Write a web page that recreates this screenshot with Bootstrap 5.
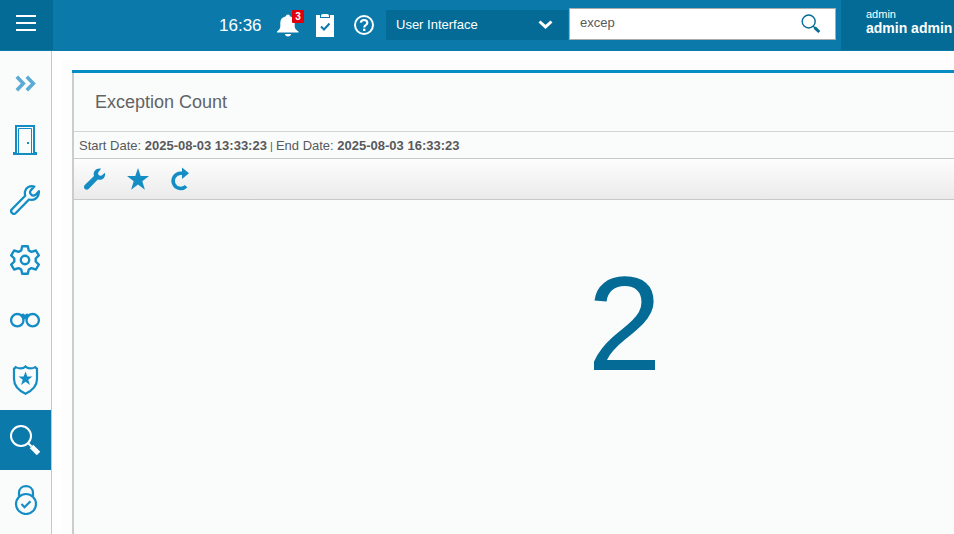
<!DOCTYPE html>
<html lang="en">
<head>
<meta charset="utf-8">
<meta name="viewport" content="width=device-width, initial-scale=1">
<title>Exception Count</title>
<link href="https://cdn.jsdelivr.net/npm/bootstrap@5.3.0/dist/css/bootstrap.min.css" rel="stylesheet">
<style>
body{font-family:"Liberation Sans",Arial,sans-serif;background:#fff;height:100vh;color:#58595b;font-size:13px;line-height:16px}
svg{display:block;flex:none}
.topbar{height:51px;padding-bottom:1px;background:#0b7aab}
.menu-btn{width:53px;height:50px;background:#036b95;border:0;border-radius:0;gap:5px;padding:0 1px 4px 0}
.menu-btn span{display:block;width:20px;height:2px;background:#fff}
.clock{font-size:17px;line-height:20px;width:42px;margin-top:2px}
.bell{width:22px;margin-left:16px;margin-right:1px}
.count{left:15px;top:-4px;width:12px;height:13px;background:#e0000b;border-radius:1px;font-size:10px;line-height:13px}
.help{margin-left:20px}
.scope{width:182px;height:30px;background:#036b95;margin-left:12px;padding:0 15px 0 10px}
.search-box{width:267px;height:32px;border:1px solid #a9abad;margin:-2px 0 0 1px;background:#fff;padding-right:14px}
.search-box input{border:0;outline:0;padding:0 0 3px 10px;width:220px;color:#58595b;font-size:13px}
.user{width:113px;height:50px;margin-left:5px;background:#036b95;padding:8px 0 0 25px;white-space:nowrap}
.user-id{font-size:11px;line-height:13px}
.user-name{font-size:14px;line-height:15px}
.content-row{min-height:0}
.side{width:52px;background:#fafcfc;border-right:1px solid #c8c8c8}
.side a{height:60px;padding-left:10px;color:#148dc4;flex:none}
.side a:first-child{height:59px;padding-top:4px;color:#5babd5}
.side a.active{background:#0b7aab;color:#fff}
.stage{background:#fdfdfd;margin:9px 0 0 10px;padding:10px 0 0 10px}
.panel{background:#fafcfc;border-top:3px solid #058cc3;min-width:0}
.panel-in{border-left:2px solid #cbcccc}
.panel-title{height:59px;border-bottom:1px solid #d2d4d4;padding-left:21px;font-size:18px;line-height:22px;font-weight:400;margin:0;color:#626365}
.dates{height:27px;border-bottom:1px solid #cacaca;padding:1px 0 0 5px;white-space:pre}
.dates small{font-size:11px}
.tools{height:41px;border-bottom:1px solid #c8c8c8;background:linear-gradient(#fdfdfd,#ebebeb);color:#148dc4;padding-left:9px}
.favorite{margin-left:20px}
.refresh{margin-left:21px}
.total{font-size:134px;line-height:150px;color:#036b95;padding:49px 0 0 221px}
</style>
<script src="https://cdn.jsdelivr.net/npm/bootstrap@5.3.0/dist/js/bootstrap.bundle.min.js"></script>
</head>
<body class="d-flex flex-column overflow-hidden">
<header class="topbar d-flex text-white flex-shrink-0">
  <button class="menu-btn d-flex flex-column align-items-center justify-content-center" aria-label="Menu"><span></span><span></span><span></span></button>
  <div class="d-flex align-items-center ms-auto">
    <div class="clock">16:36</div>
    <div class="bell position-relative">
      <svg width="22" height="23" viewBox="0 0 22 23" fill="currentColor"><path d="M11 0.500c1.200 0 1.800.8 1.900 1.800 3.300.8 4.800 3.300 4.800 6.500v3.700c0 2.300 1.700 3.700 3.800 4.900v1H0v-1c1.700-1.200 3.300-2.600 3.300-4.900V8.800c0-3.200 1.800-5.700 5.600-6.500.1-1 .9-1.800 2.100-1.800zM7.800 20h6.400c-.4 1.500-1.500 2.500-3.200 2.500s-2.800-1-3.200-2.500z"/></svg>
      <span class="count position-absolute fw-bold text-center">3</span>
    </div>
    <svg class="ms-3" width="18" height="23" viewBox="0 0 18 23"><path fill="#fff" d="M0 1h4v3h10V1h4v22H0z"/><path fill="#fff" d="M5 3V1.500Q5 0 7 0h4q2 0 2 1.500V3z"/><path d="M5 12.500l3 3 5.500-6" fill="none" stroke="#0b7aab" stroke-width="2"/></svg>
    <svg class="help" width="20" height="20" viewBox="0 0 20 20" fill="none" stroke="#fff"><circle cx="10" cy="10" r="9" stroke-width="2"/><path d="M6.800 7.600C7 5.900 8.200 5 10 5c2 0 3.300 1 3.300 2.700 0 2.300-3 2.300-3 4.700" stroke-width="2.200"/><path d="M9 13.700h2.400V16H9z" fill="#fff" stroke="none"/></svg>
    <div class="scope d-flex align-items-center justify-content-between"><span>User Interface</span><svg width="15" height="10" viewBox="0 0 15 10"><path d="M1.500 1.500l6 5.400 6-5.400" fill="none" stroke="#fff" stroke-width="3"/></svg></div>
    <div class="search-box d-flex align-items-center justify-content-between"><input type="text" value="excep" aria-label="Search"><svg width="20" height="20" viewBox="0 0 20 20" fill="none" stroke="#036b95"><circle cx="7.700" cy="7.500" r="6.500" stroke-width="1.400"/><path d="M12 12l2 2" stroke-width="1.300"/><path d="M13.700 13.700l4.600 4.300" stroke-width="3"/></svg></div>
    <div class="user align-self-start"><div class="user-id">admin</div><div class="user-name fw-bold">admin admin</div></div>
  </div>
</header>
<div class="content-row d-flex flex-grow-1">
  <nav class="side d-flex flex-column flex-shrink-0 overflow-hidden">
    <a href="#" class="d-flex align-items-center" aria-label="Expand"><svg width="30" height="30" viewBox="0 0 30 30" fill="none" stroke="currentColor" stroke-width="3.600"><path d="M6.800 8.800l6.500 6.700-6.500 6.700M16.800 8.800l6.500 6.700-6.500 6.700"/></svg></a>
    <a href="#" class="d-flex align-items-center" aria-label="Doors"><svg width="30" height="30" viewBox="0 0 30 30" fill="none" stroke="currentColor"><path d="M6 28V1h18v27" stroke-width="2"/><path d="M8.500 28V3.500h13V28"/><path d="M3 27h3v1h18v-1h3v3H3zM17 17h2v2h-2z" fill="currentColor" stroke="none"/></svg></a>
    <a href="#" class="d-flex align-items-center" aria-label="Tools"><svg width="30" height="30" viewBox="0 0 30 30" fill="none" stroke="currentColor" stroke-width="2.300" stroke-linejoin="round"><path d="M24.300 1.500C20 .3 15.800 2.500 15 6.500c-.3 1.400-.1 2.800.2 4.300L1.900 24.200c-1 1.100-1 2.700.1 3.800s2.700 1 3.800 0L19 14.500c4.800 1.500 9.900-1.500 9.900-8.300l-3.200 3.500c-1.500 1.200-3.500.9-4.600-.2-1.300-1.300-1.300-3-.2-4.400z"/></svg></a>
    <a href="#" class="d-flex align-items-center" aria-label="Settings"><svg width="30" height="30" viewBox="0 0 30 30" fill="none" stroke="currentColor" stroke-width="2.400" stroke-linejoin="round"><path d="M12.200 1.200h5.600l1 4.300 2.600 1.400 4.500-1.400 2.900 4.900-3.100 3.100v3l3.100 3.100-2.900 4.900-4.500-1.400-2.600 1.400-1 4.300h-5.600l-1-4.300-2.600-1.400-4.500 1.400-2.900-4.900 3.100-3.100v-3l-3.100-3.100 2.900-4.900 4.500 1.400 2.600-1.400z"/><circle cx="15" cy="15" r="4.200"/></svg></a>
    <a href="#" class="d-flex align-items-center" aria-label="Monitoring"><svg width="30" height="30" viewBox="0 0 30 30" fill="none" stroke="currentColor" stroke-width="2.300"><circle cx="7.300" cy="15.200" r="6.200"/><circle cx="22.700" cy="15.200" r="6.200"/><path d="M11 9l2.500-.5 1 1h1l1-1 2.500.5-2 6.500h-.7a1.300 1.300 0 0 0-2.600 0H13z" fill="currentColor" stroke="none"/></svg></a>
    <a href="#" class="d-flex align-items-center" aria-label="Security"><svg width="30" height="30" viewBox="0 0 30 30"><path d="M15.500 1.400c-1.500 1.600-3.200 2-5 2-1.800 0-3.300-.5-4.800-1.300-.6 1-1.300 1.500-1.700 1.700v10.200c0 6.500 4.700 11.500 11.500 14.800 6.800-3.300 11.500-8.300 11.500-14.800V3.800c-.4-.2-1.100-.7-1.700-1.700-1.500.8-3 1.300-4.800 1.300-1.800 0-3.500-.4-5-2z" fill="none" stroke="currentColor" stroke-width="2.200"/><path d="M15.500 6.500l1.800 5h5.200l-4.200 3.200 1.600 5.200-4.400-3.100-4.400 3.100 1.600-5.200-4.200-3.200h5.200z" fill="currentColor"/></svg></a>
    <a href="#" class="active d-flex align-items-center" aria-label="Search"><svg width="30" height="30" viewBox="0 0 30 30" fill="none" stroke="currentColor"><circle cx="11" cy="11" r="10" stroke-width="2"/><path d="M18.500 18.500l3 3" stroke-width="2"/><path d="M21.500 21.500l7 7" stroke-width="4.800"/></svg></a>
    <a href="#" class="d-flex align-items-center" aria-label="Access"><svg width="30" height="30" viewBox="0 0 30 30" fill="none" stroke="currentColor" stroke-width="2.200"><circle cx="16" cy="19" r="10"/><path d="M9 11.500V8c0-9.200 14-9.200 14 0v3.500M11.500 19l3 3.200 6-6"/></svg></a>
  </nav>
  <main class="stage d-flex flex-grow-1">
    <section class="panel flex-grow-1 d-flex">
      <div class="panel-in flex-grow-1">
        <h1 class="panel-title d-flex align-items-center">Exception Count</h1>
        <div class="dates d-flex align-items-center"><div>Start Date: <b>2025-08-03 13:33:23</b><small> | </small>End Date: <b>2025-08-03 16:33:23</b></div></div>
        <div class="tools d-flex align-items-center">
          <svg width="24" height="24" viewBox="0 0 24 24" fill="currentColor"><path d="M18 1.700c-4.500-1-8.500 2.800-7 7.200L1.800 17.900c-1.300 1.300-1 3 .1 4 1.200 1 2.700 1 3.900-.2l9-9.200c4.800 1.200 8-2 7.200-6.800l-3 2.500c-1.200.8-2.500.6-3.300-.3-.8-1-.8-2.300.1-3.200z"/></svg>
          <svg class="favorite" width="22" height="22" viewBox="0 0 22 22" fill="currentColor"><path d="M11 0l2.700 8H22l-6.700 5.200 2.600 8.600L11 16.600l-6.900 5.200 2.600-8.600L0 8h8.300z"/></svg>
          <svg class="refresh" width="20" height="24" viewBox="0 0 20 24"><path d="M13 6.300H10.500a7.600 7.600 0 1 0 5.600 13" fill="none" stroke="currentColor" stroke-width="3.600"/><path d="M12 .5l7 5.800-7 5.700z" fill="currentColor"/></svg>
        </div>
        <div class="total text-center">2</div>
      </div>
    </section>
  </main>
</div>
</body>
</html>
